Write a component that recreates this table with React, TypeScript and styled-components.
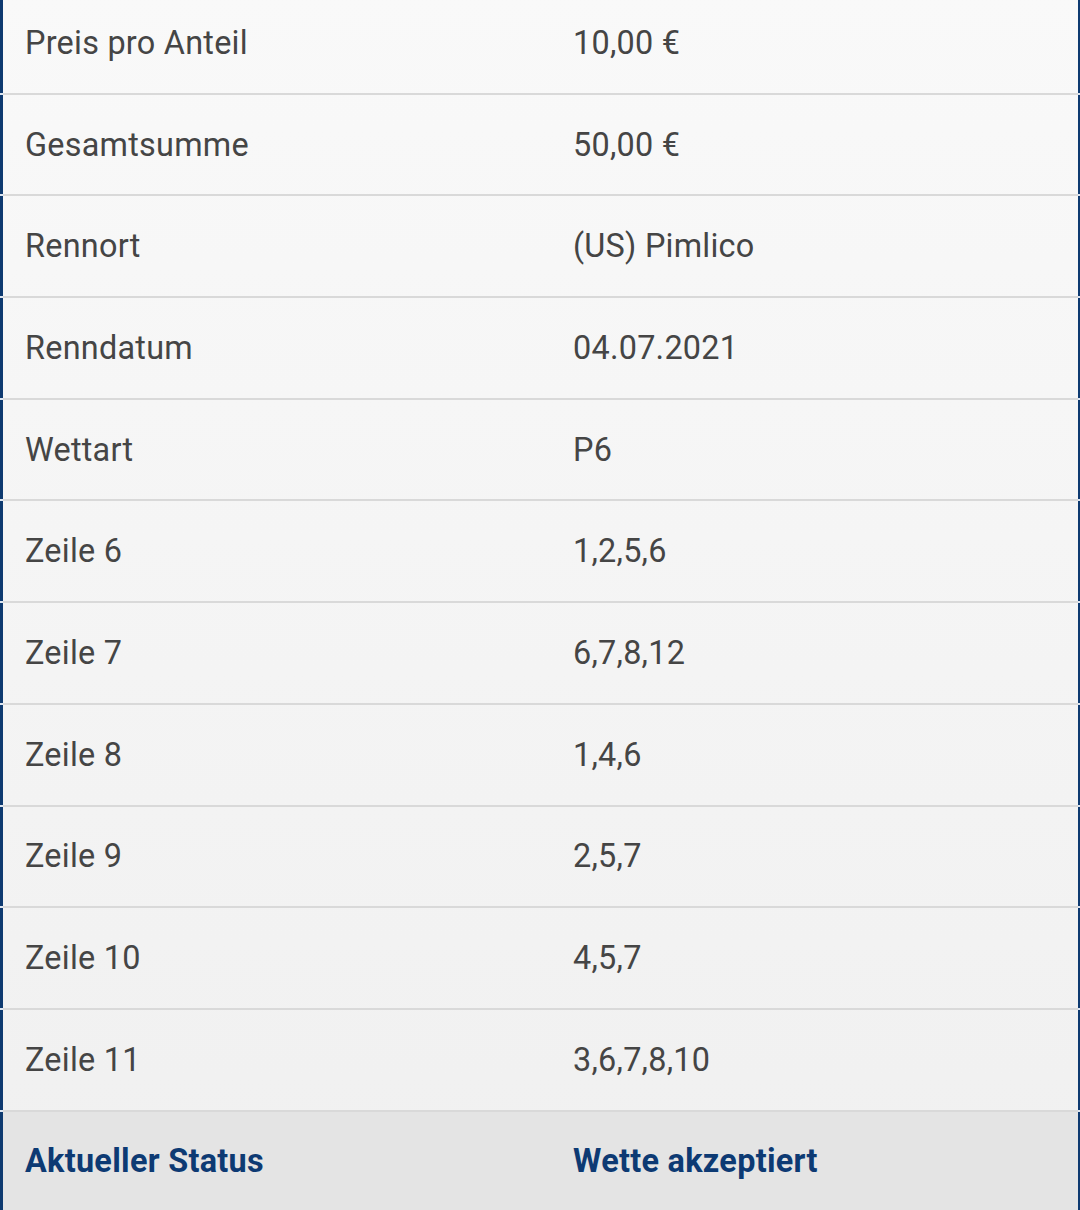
import styled, { createGlobalStyle } from 'styled-components';

const GlobalStyle = createGlobalStyle`
  html, body {
    margin: 0;
    padding: 0;
    background: #ffffff;
  }
  body {
    font-family: Roboto, "Noto Sans", sans-serif;
    overflow: hidden;
  }
`;

const Table = styled.div`
  display: flex;
  flex-direction: column;
  margin-top: -7px;
  background: linear-gradient(180deg, #f9f9f9 0%, #f0f0f0 100%);
`;

const Row = styled.div<{ $status?: boolean }>`
  display: grid;
  grid-template-columns: 548px 1fr;
  align-items: center;
  height: 99.7px;
  padding-left: 22px;
  border-left: 3px solid #0e3a70;
  border-right: 2px solid #0e3a70;
  background: ${({ $status }) => ($status ? '#e4e4e4' : 'transparent')};
  color: ${({ $status }) => ($status ? '#0d3a73' : '#454545')};
  font-size: 32.4px;
  font-weight: ${({ $status }) => ($status ? 700 : 400)};
  letter-spacing: ${({ $status }) => ($status ? '0.3px' : '0.25px')};
`;

const Divider = styled.div`
  height: 2px;
  background: #d9d9d9;
  border-left: 3px solid #dde6f2;
  border-right: 2px solid #dde6f2;
`;

const Cell = styled.span`
  white-space: nowrap;
`;

const rows: [string, string][] = [
  ['Preis pro Anteil', '10,00 €'],
  ['Gesamtsumme', '50,00 €'],
  ['Rennort', '(US) Pimlico'],
  ['Renndatum', '04.07.2021'],
  ['Wettart', 'P6'],
  ['Zeile 6', '1,2,5,6'],
  ['Zeile 7', '6,7,8,12'],
  ['Zeile 8', '1,4,6'],
  ['Zeile 9', '2,5,7'],
  ['Zeile 10', '4,5,7'],
  ['Zeile 11', '3,6,7,8,10'],
];

export default function App() {
  return (
    <>
      <GlobalStyle />
      <Table>
        {rows.map(([label, value]) => (
          <div key={label}>
            <Row>
              <Cell>{label}</Cell>
              <Cell>{value}</Cell>
            </Row>
            <Divider />
          </div>
        ))}
        <Row $status>
          <Cell>Aktueller Status</Cell>
          <Cell>Wette akzeptiert</Cell>
        </Row>
      </Table>
    </>
  );
}
